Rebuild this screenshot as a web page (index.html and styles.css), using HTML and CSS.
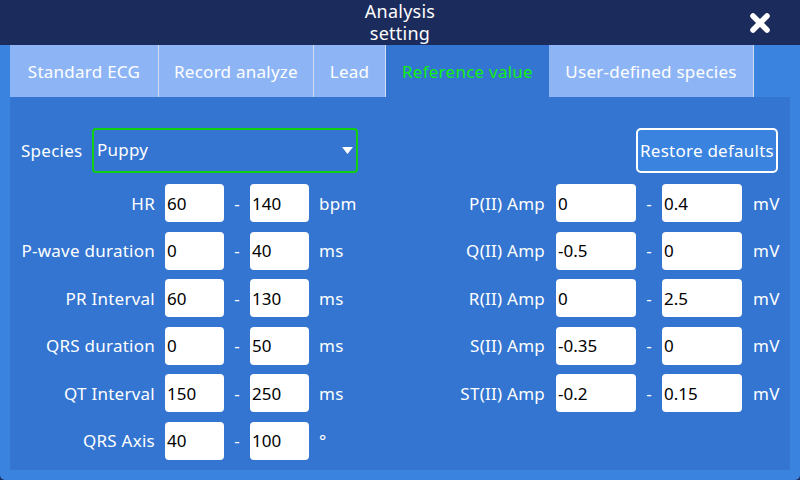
FILE: index.html
```html
<!DOCTYPE html>
<html lang="en">
  <head>
    <meta charset="UTF-8" />
    <meta name="viewport" content="width=device-width, initial-scale=1.0" />
    <title>Analysis setting</title>
    <link rel="stylesheet" href="styles.css">
  </head>
  <body>
    <div class="window">
      <header class="titlebar">
        <h1>Analysis<br>setting</h1>
        <button class="close" type="button" aria-label="Close">
          <svg width="22" height="22" viewBox="0 0 22 22">
            <path d="M4 4 L18 18 M18 4 L4 18" stroke="#fff" stroke-width="5.5" stroke-linecap="round" />
          </svg>
        </button>
      </header>

      <div class="frame">
        <nav class="tabs">
          <div class="tab tab-ecg">Standard ECG</div>
          <div class="tab tab-record">Record analyze</div>
          <div class="tab tab-lead">Lead</div>
          <div class="tab tab-ref active">Reference value</div>
          <div class="tab tab-user">User-defined species</div>
        </nav>

        <section class="panel">
          <div class="top-row">
            <div class="species">
              <label for="species">Species</label>
              <div class="select" id="species">
                <span>Puppy</span>
                <svg class="arrow" width="11" height="7" viewBox="0 0 11 7">
                  <path d="M0 0 H11 L5.5 7 Z" fill="#fff" />
                </svg>
              </div>
            </div>
            <button class="restore" type="button">Restore defaults</button>
          </div>

          <div class="columns">
            <div class="grid grid-left">
              <span class="lbl">HR</span><span class="val">60</span><span class="dash">-</span><span class="val">140</span><span class="unit">bpm</span>
              <span class="lbl">P-wave duration</span><span class="val">0</span><span class="dash">-</span><span class="val">40</span><span class="unit">ms</span>
              <span class="lbl">PR Interval</span><span class="val">60</span><span class="dash">-</span><span class="val">130</span><span class="unit">ms</span>
              <span class="lbl">QRS duration</span><span class="val">0</span><span class="dash">-</span><span class="val">50</span><span class="unit">ms</span>
              <span class="lbl">QT Interval</span><span class="val">150</span><span class="dash">-</span><span class="val">250</span><span class="unit">ms</span>
              <span class="lbl">QRS Axis</span><span class="val">40</span><span class="dash">-</span><span class="val">100</span><span class="unit">°</span>
            </div>

            <div class="grid grid-right">
              <span class="lbl">P(II) Amp</span><span class="val">0</span><span class="dash">-</span><span class="val">0.4</span><span class="unit">mV</span>
              <span class="lbl">Q(II) Amp</span><span class="val">-0.5</span><span class="dash">-</span><span class="val">0</span><span class="unit">mV</span>
              <span class="lbl">R(II) Amp</span><span class="val">0</span><span class="dash">-</span><span class="val">2.5</span><span class="unit">mV</span>
              <span class="lbl">S(II) Amp</span><span class="val">-0.35</span><span class="dash">-</span><span class="val">0</span><span class="unit">mV</span>
              <span class="lbl">ST(II) Amp</span><span class="val">-0.2</span><span class="dash">-</span><span class="val">0.15</span><span class="unit">mV</span>
            </div>
          </div>
        </section>
      </div>
    </div>
  </body>
</html>
```

FILE: styles.css
```css
* {
  box-sizing: border-box;
}

html,
body {
  margin: 0;
  padding: 0;
  background-color: #1b2b5b;
}

body {
  font-family: "Noto Sans", "Open Sans", sans-serif;
  font-size: 17px;
  letter-spacing: 0.25px;
  color: #ffffff;
}

.window {
  width: 800px;
  height: 480px;
  display: flex;
  flex-direction: column;
}

.titlebar {
  position: relative;
  height: 45px;
  background-color: #1b2b5b;
  text-align: center;
}

.titlebar h1 {
  margin: 0;
  padding-top: 0;
  font-size: 18px;
  font-weight: normal;
  line-height: 22px;
}

.close {
  position: absolute;
  top: 12px;
  left: 749px;
  width: 22px;
  height: 22px;
  padding: 0;
  border: none;
  background: none;
}

.frame {
  flex: 1;
  display: flex;
  flex-direction: column;
  background-color: #3a83df;
  padding: 0 10px 10px 10px;
  border-radius: 0 0 5px 5px;
}

.tabs {
  display: flex;
  height: 52px;
}

.tab {
  display: flex;
  align-items: center;
  justify-content: center;
  background-color: #8db5f6;
  border-right: 1px solid #d2dcee;
  color: #ffffff;
  white-space: nowrap;
}

.tab-ecg {
  width: 149px;
}

.tab-record {
  width: 155px;
}

.tab-lead {
  width: 72px;
}

.tab-ref {
  width: 163px;
}

.tab-user {
  width: 205px;
}

.tab.active {
  background-color: #3375d0;
  color: #12ee12;
  border-right: none;
}

.panel {
  flex: 1;
  background-color: #3375d0;
  padding: 31px 12px 0 11px;
}

.top-row {
  display: flex;
  justify-content: space-between;
  align-items: center;
  height: 45px;
}

.species {
  display: flex;
  align-items: center;
}

.species label {
  width: 71px;
}

.select {
  display: flex;
  align-items: center;
  justify-content: space-between;
  width: 266px;
  height: 45px;
  border: 2px solid #10d010;
  border-radius: 4px;
  padding: 0 3px 0 3px;
}

.select span {
  padding-bottom: 2px;
}

.restore {
  width: 142px;
  height: 45px;
  background-color: #3a83df;
  border: 2px solid #ffffff;
  border-radius: 5px;
  color: #ffffff;
  font-family: inherit;
  font-size: 17px;
  letter-spacing: 0.25px;
  padding: 0;
}

.columns {
  display: flex;
  justify-content: space-between;
  margin-top: 11px;
}

.grid {
  display: grid;
  grid-auto-rows: 38px;
  row-gap: 9.6px;
  align-items: center;
}

.grid-left {
  grid-template-columns: 144px 59px 26px 59px auto;
}

.grid-right {
  grid-template-columns: 120px 80px 26px 80px 36px;
}

.lbl {
  text-align: right;
  padding-right: 10px;
  white-space: nowrap;
}

.grid-right .lbl {
  padding-right: 11px;
}

.val {
  height: 38px;
  display: flex;
  align-items: center;
  background-color: #ffffff;
  color: #000000;
  border-radius: 4px;
  padding-left: 2px;
  letter-spacing: 0;
}

.dash {
  text-align: center;
}

.unit {
  padding-left: 10px;
}

.grid-right .unit {
  padding-left: 11px;
}
```
